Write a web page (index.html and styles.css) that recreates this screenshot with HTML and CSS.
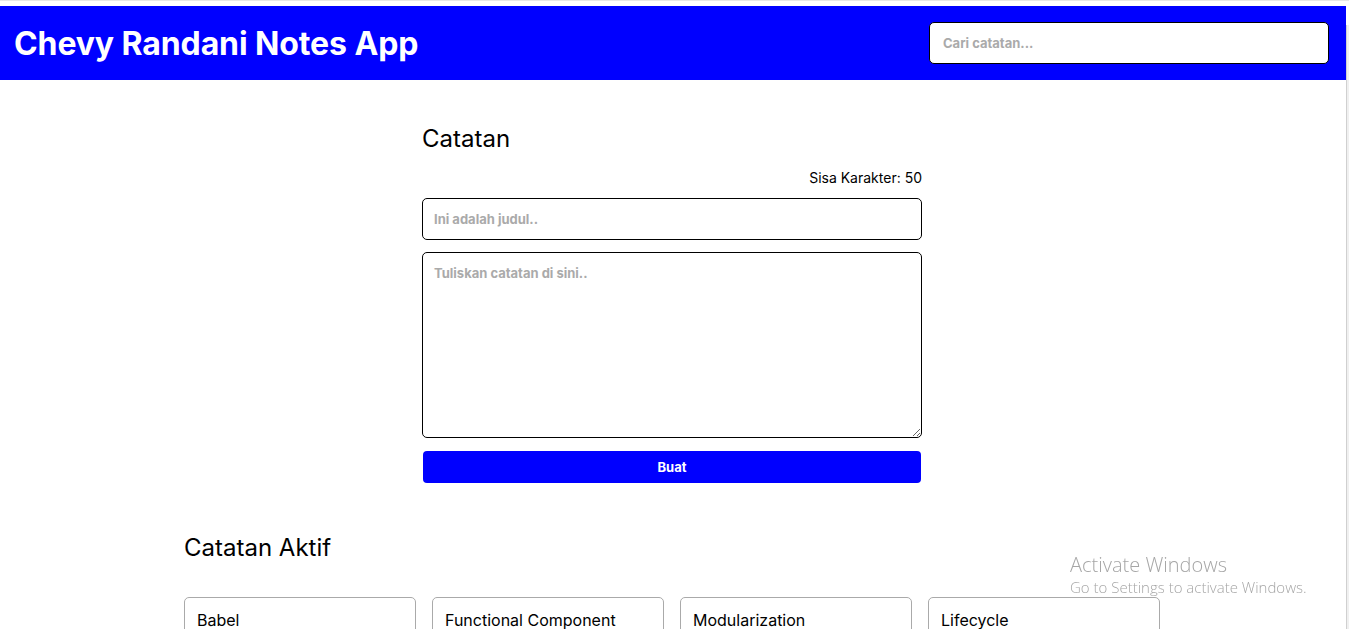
FILE: index.html
```html
<!DOCTYPE html>
<html lang="id">
<head>
<meta charset="utf-8">
<title>Chevy Randani Notes App</title>
<link rel="stylesheet" href="styles.css">
</head>
<body>
<div class="window">
  <div class="page">
    <header class="app-header">
      <h1 class="app-title">Chevy Randani Notes App</h1>
      <input class="search" type="text" placeholder="Cari catatan...">
    </header>
    <main class="app-body">
      <section class="note-input">
        <h2 class="section-title">Catatan</h2>
        <p class="char-limit">Sisa Karakter: 50</p>
        <input class="field title-field" type="text" placeholder="Ini adalah judul..">
        <textarea class="field body-field" placeholder="Tuliskan catatan di sini.."></textarea>
        <button class="submit" type="button">Buat</button>
      </section>
      <section class="notes">
        <h2 class="section-title">Catatan Aktif</h2>
        <div class="notes-list">
          <article class="note-card"><h3 class="note-title">Babel</h3></article>
          <article class="note-card"><h3 class="note-title">Functional Component</h3></article>
          <article class="note-card"><h3 class="note-title">Modularization</h3></article>
          <article class="note-card"><h3 class="note-title">Lifecycle</h3></article>
        </div>
      </section>
    </main>
  </div>
  <div class="scrollbar"></div>
</div>
<div class="watermark">
  <div class="wm-title">Activate Windows</div>
  <div class="wm-sub">Go to Settings to activate Windows.</div>
</div>
</body>
</html>
```
FILE: styles.css
```css
* { box-sizing: border-box; }
html, body { margin: 0; height: 100%; overflow: hidden; }
body {
  font-family: Inter, "Noto Sans", sans-serif;
  color: #000;
  background: #fff;
}
.window {
  display: flex;
  height: 100%;
  padding-top: 6px;
  border-top: 1px solid #e6e6e6;
}
.page { flex: 1; min-width: 0; }
.scrollbar {
  width: 3px;
  margin-top: 18px;
  border-left: 1px solid #d0d0d0;
  background: #f0f0f0;
}
.app-header {
  background: #0000ff;
  height: 74px;
  display: flex;
  align-items: center;
  justify-content: space-between;
  padding: 0 17px 0 14px;
  margin-top: -1px;
}
.app-title {
  margin: 0;
  color: #fff;
  font-size: 32px;
  font-weight: 700;
  letter-spacing: -0.1px;
}
.search {
  width: 400px;
  height: 42px;
  border: 1px solid #000;
  border-radius: 5px;
  padding: 0 13px;
  font-family: Inter, sans-serif;
  font-size: 13px;
  font-weight: 700;
  outline: none;
}
.search::placeholder, .field::placeholder { color: #aaa; opacity: 1; }
.app-body { padding-top: 44px; }
.note-input {
  width: 502px;
  padding-right: 2px;
  margin: 0 auto;
  display: flex;
  flex-direction: column;
}
.section-title {
  margin: 0;
  font-size: 24px;
  font-weight: 400;
  line-height: 29px;
}
.char-limit {
  margin: 16px 0 0;
  text-align: right;
  font-size: 14px;
  line-height: 17px;
}
.field {
  width: 100%;
  border: 1px solid #000;
  border-radius: 5px;
  padding: 12px 11px;
  font-family: Inter, sans-serif;
  font-size: 13px;
  font-weight: 700;
  outline: none;
}
.title-field { height: 42px; margin-top: 12px; }
.body-field { height: 186px; margin-top: 12px; padding-top: 12px; resize: vertical; }
.submit {
  margin-top: 13px;
  height: 32px;
  border: none;
  border-radius: 4px;
  background: #0000ff;
  color: #fff;
  font-family: Inter, sans-serif;
  font-size: 13px;
  font-weight: 700;
  margin-left: 1px;
  margin-right: 1px;
}
.notes {
  width: 978px;
  margin: 0 auto;
  padding-top: 50px;
}
.notes-list {
  margin-top: 35px;
  display: grid;
  grid-template-columns: repeat(4, 232px);
  gap: 16px;
}
.note-card {
  border: 1px solid #aaa;
  border-radius: 5px;
  padding: 12px;
  height: 150px;
}
.note-title {
  margin: 0;
  font-size: 16px;
  font-weight: 400;
  line-height: 21px;
}
.watermark {
  position: fixed;
  left: 1070px;
  top: 553px;
  color: #a6a6a6;
  font-family: "Open Sans", "Noto Sans", sans-serif;
  font-weight: 300;
}
.wm-title { font-size: 20px; line-height: 24px; }
.wm-sub { font-size: 15px; line-height: 20px; }
```
